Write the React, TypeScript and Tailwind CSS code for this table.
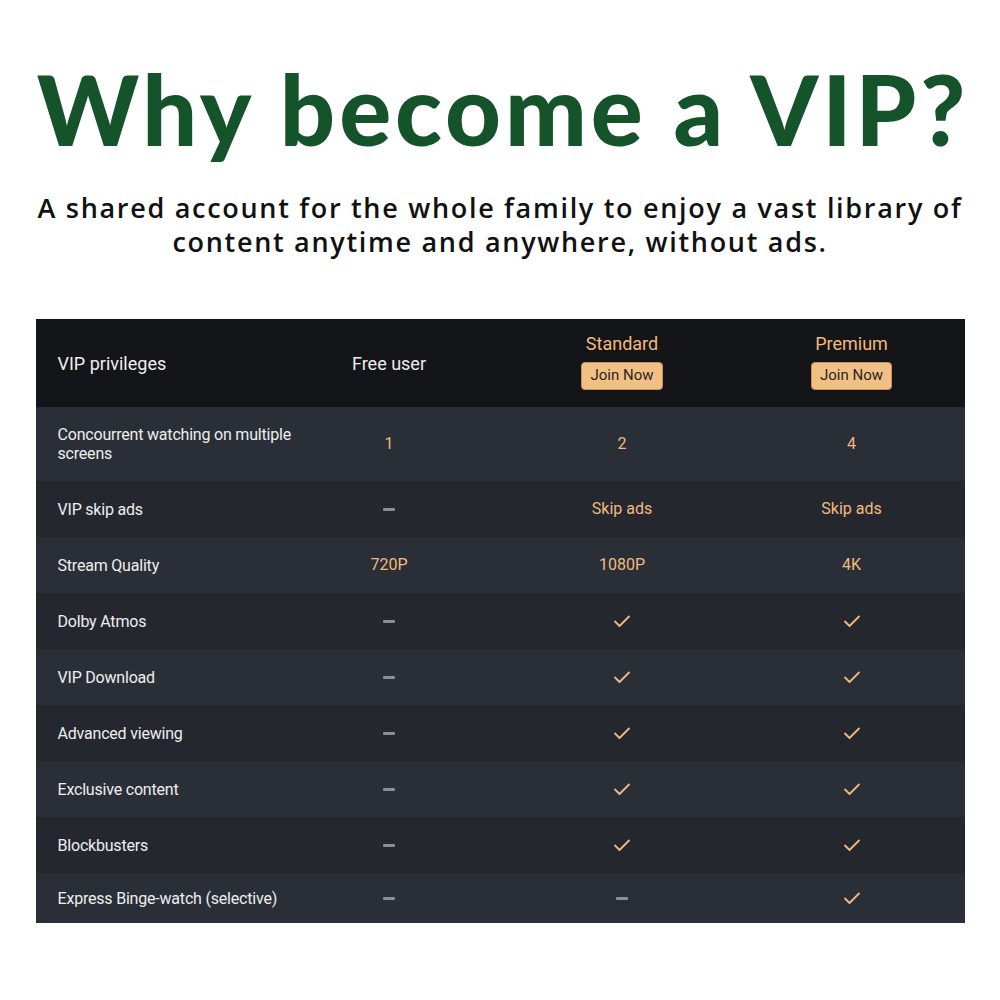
import React from "react";

type Cell = { kind: "text"; v: string } | { kind: "dash" } | { kind: "check" };

const t = (v: string): Cell => ({ kind: "text", v });
const D: Cell = { kind: "dash" };
const C: Cell = { kind: "check" };

const rows: { label: string; cells: Cell[]; h: string }[] = [
  { label: "Concourrent watching on multiple screens", cells: [t("1"), t("2"), t("4")], h: "h-[74px]" },
  { label: "VIP skip ads", cells: [D, t("Skip ads"), t("Skip ads")], h: "h-[56px]" },
  { label: "Stream Quality", cells: [t("720P"), t("1080P"), t("4K")], h: "h-[56px]" },
  { label: "Dolby Atmos", cells: [D, C, C], h: "h-[56px]" },
  { label: "VIP Download", cells: [D, C, C], h: "h-[56px]" },
  { label: "Advanced viewing", cells: [D, C, C], h: "h-[56px]" },
  { label: "Exclusive content", cells: [D, C, C], h: "h-[56px]" },
  { label: "Blockbusters", cells: [D, C, C], h: "h-[56px]" },
  { label: "Express Binge-watch (selective)", cells: [D, D, C], h: "h-[50px]" },
];

function Check() {
  return (
    <svg width="18" height="14" viewBox="0 0 18 14" fill="none">
      <path d="M2 7.5 L6.5 12 L16 2.5" stroke="#f0bb7e" strokeWidth="1.8" strokeLinecap="round" strokeLinejoin="round" />
    </svg>
  );
}

function CellView({ c }: { c: Cell }) {
  if (c.kind === "dash") return <div className="w-[12px] h-[3px] bg-[#8b8e94] rounded-[1px]" />;
  if (c.kind === "check") return <Check />;
  return <span className="text-[#f0bb7e] text-[16px]">{c.v}</span>;
}

export default function App() {
  return (
    <div className="w-[1000px] h-[1000px] bg-white flex flex-col items-center" style={{ fontFamily: "Roboto, 'Liberation Sans', sans-serif" }}>
      <h1
        className="mt-[53px] ml-[6px] text-[#15532b] text-[97px] leading-[112px] tracking-[3.9px] whitespace-nowrap"
        style={{ fontFamily: "Lato, 'DejaVu Sans', sans-serif", fontWeight: 900 }}
      >
        Why become a VIP?
      </h1>
      <div
        className="mt-[26px] flex flex-col items-center text-[#111] text-[27px] leading-[34px] tracking-[1.7px] font-semibold whitespace-nowrap"
        style={{ fontFamily: "'Open Sans', 'DejaVu Sans', sans-serif" }}
      >
        <span>A shared account for the whole family to enjoy a vast library of</span>
        <span>content anytime and anywhere, without ads.</span>
      </div>
      <div className="mt-[60px] w-[929px] flex flex-col">
        <div className="grid grid-cols-[237px_233px_233px_1fr] h-[88px] bg-[#141518] items-center">
          <div className="pl-[22px] text-[#eeeeee] text-[18px]">VIP privileges</div>
          <div className="text-center text-[#eeeeee] text-[18px]">Free user</div>
          {["Standard", "Premium"].map((n) => (
            <div key={n} className="flex flex-col items-center gap-[7px] -mt-[4px]">
              <span className="text-[#f0bb7e] text-[18px] leading-[22px]">{n}</span>
              <button className="h-[28px] px-[8px] bg-[#f2c084] border border-[#c4935a] rounded-[4px] text-[#2a2520] text-[15px] leading-none">
                Join Now
              </button>
            </div>
          ))}
        </div>
        {rows.map((r, i) => (
          <div
            key={r.label}
            className={`grid grid-cols-[237px_233px_233px_1fr] items-center ${r.h} ${i % 2 === 0 ? "bg-[#2a2e36]" : "bg-[#24272e]"}`}
          >
            <div className="pl-[22px]">
              <div className="w-[250px] text-[#eeeeee] text-[16px] leading-[19px] tracking-[-0.2px]">{r.label}</div>
            </div>
            {r.cells.map((c, j) => (
              <div key={j} className="flex justify-center items-center">
                <CellView c={c} />
              </div>
            ))}
          </div>
        ))}
      </div>
    </div>
  );
}
